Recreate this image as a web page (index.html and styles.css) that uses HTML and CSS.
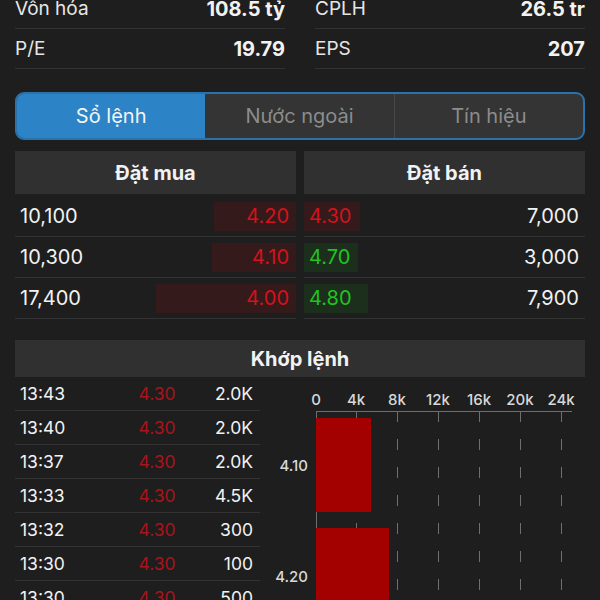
FILE: index.html
```html
<!DOCTYPE html>
<html lang="vi">
<head>
    <meta charset="UTF-8">
    <meta name="viewport" content="width=device-width, initial-scale=1.0">
    <title>Sổ lệnh</title>
    <link rel="stylesheet" href="styles.css">
</head>
<body>
    <div class="page">
        <!-- Chỉ số cơ bản -->
        <div class="stats">
            <div class="stat-col">
                <div class="stat-row"><span class="stat-label">Vốn hóa</span><span class="stat-value">108.5 tỷ</span></div>
                <div class="stat-row"><span class="stat-label">P/E</span><span class="stat-value">19.79</span></div>
            </div>
            <div class="stat-col">
                <div class="stat-row"><span class="stat-label">CPLH</span><span class="stat-value">26.5 tr</span></div>
                <div class="stat-row"><span class="stat-label">EPS</span><span class="stat-value">207</span></div>
            </div>
        </div>

        <div class="tabs">
            <div class="tab active">Sổ lệnh</div>
            <div class="tab">Nước ngoài</div>
            <div class="tab">Tín hiệu</div>
        </div>

        <!-- Sổ lệnh -->
        <div class="book">
            <div class="book-side bid">
                <div class="book-head">Đặt mua</div>
                <div class="book-rows">
                    <div class="book-row"><span class="vol">10,100</span><span class="price down" style="width: 82px">4.20</span></div>
                    <div class="book-row"><span class="vol">10,300</span><span class="price down" style="width: 84px">4.10</span></div>
                    <div class="book-row"><span class="vol">17,400</span><span class="price down" style="width: 140px">4.00</span></div>
                </div>
            </div>
            <div class="book-side ask">
                <div class="book-head">Đặt bán</div>
                <div class="book-rows">
                    <div class="book-row"><span class="price down" style="width: 56px">4.30</span><span class="vol">7,000</span></div>
                    <div class="book-row"><span class="price up" style="width: 54px">4.70</span><span class="vol">3,000</span></div>
                    <div class="book-row"><span class="price up" style="width: 64px">4.80</span><span class="vol">7,900</span></div>
                </div>
            </div>
        </div>

        <!-- Khớp lệnh -->
        <div class="match">
            <div class="match-head">Khớp lệnh</div>
            <div class="match-body">
                <div class="match-list">
                    <div class="match-row"><span>13:43</span><span class="m-price">4.30</span><span class="m-vol">2.0K</span></div>
                    <div class="match-row"><span>13:40</span><span class="m-price">4.30</span><span class="m-vol">2.0K</span></div>
                    <div class="match-row"><span>13:37</span><span class="m-price">4.30</span><span class="m-vol">2.0K</span></div>
                    <div class="match-row"><span>13:33</span><span class="m-price">4.30</span><span class="m-vol">4.5K</span></div>
                    <div class="match-row"><span>13:32</span><span class="m-price">4.30</span><span class="m-vol">300</span></div>
                    <div class="match-row"><span>13:30</span><span class="m-price">4.30</span><span class="m-vol">100</span></div>
                    <div class="match-row"><span>13:30</span><span class="m-price">4.30</span><span class="m-vol">500</span></div>
                </div>
                <div class="match-chart">
                    <svg width="325" height="240" viewBox="0 0 325 240">
                        <g class="axis-text">
                            <text x="56" y="28">0</text>
                            <text x="96" y="28">4k</text>
                            <text x="137" y="28">8k</text>
                            <text x="178" y="28">12k</text>
                            <text x="219" y="28">16k</text>
                            <text x="260" y="28">20k</text>
                            <text x="301" y="28">24k</text>
                        </g>
                        <g class="grid">
                            <line x1="96.5" y1="34" x2="96.5" y2="240"></line>
                            <line x1="137.5" y1="34" x2="137.5" y2="240"></line>
                            <line x1="178.5" y1="34" x2="178.5" y2="240"></line>
                            <line x1="219.5" y1="34" x2="219.5" y2="240"></line>
                            <line x1="260.5" y1="34" x2="260.5" y2="240"></line>
                            <line x1="301.5" y1="34" x2="301.5" y2="240"></line>
                        </g>
                        <line class="axis" x1="56" y1="34.5" x2="312" y2="34.5"></line>
                        <line class="axis" x1="96.5" y1="34" x2="96.5" y2="41"></line>
                        <line class="axis" x1="56.5" y1="34" x2="56.5" y2="240"></line>
                        <rect class="bar" x="56" y="41" width="55" height="94"></rect>
                        <rect class="bar" x="56" y="151" width="73" height="94"></rect>
                        <g class="cat-text">
                            <text x="48" y="94">4.10</text>
                            <text x="48" y="205">4.20</text>
                        </g>
                    </svg>
                </div>
            </div>
        </div>
    </div>
</body>
</html>
```

FILE: styles.css
```css
body {
    margin: 0;
    padding: 0;
    background-color: #1e1e1e;
    color: #f2f2f2;
    font-family: Inter, "Noto Sans", sans-serif;
    overflow: hidden;
}
.page {
    padding: 0 15px;
}
.stats {
    display: flex;
    gap: 30px;
    margin-top: -11px;
}
.stat-col {
    flex: 1;
}
.stat-row {
    display: flex;
    justify-content: space-between;
    align-items: center;
    height: 39px;
    border-bottom: 1px solid #333;
    font-size: 19px;
}
.stat-label {
    color: #e6e6e6;
}
.stat-value {
    font-weight: bold;
    font-size: 20px;
}
.tabs {
    display: flex;
    margin-top: 23px;
    height: 44px;
    border: 2px solid #2b72aa;
    border-radius: 9px;
    overflow: hidden;
    background-color: #343434;
}
.tab {
    flex: 1;
    display: flex;
    align-items: center;
    justify-content: center;
    font-size: 20px;
    color: #8c8c8c;
}
.tab + .tab + .tab {
    border-left: 1px solid #4a4a4a;
}
.tab.active {
    background-color: #2c84c7;
    color: #f4f4f4;
}
.book {
    display: flex;
    gap: 8px;
    margin-top: 11px;
}
.book-side {
    flex: 1;
}
.book-head {
    height: 43px;
    display: flex;
    align-items: center;
    justify-content: center;
    background-color: #303030;
    font-weight: bold;
    font-size: 20px;
}
.book-rows {
    padding-top: 2px;
}
.book-row {
    display: flex;
    justify-content: space-between;
    align-items: center;
    height: 40px;
    border-bottom: 1px solid #333;
    font-size: 20px;
}
.bid .vol {
    padding-left: 5px;
}
.ask .vol {
    padding-right: 6px;
}
.price {
    height: 29px;
    line-height: 29px;
    box-sizing: border-box;
}
.bid .price {
    text-align: right;
    padding-right: 7px;
}
.ask .price {
    padding-left: 5px;
}
.price.down {
    color: #d3121b;
    background-color: #351a1b;
}
.price.up {
    color: #22c321;
    background-color: #1c2f1d;
}
.match {
    margin-top: 21px;
}
.match-head {
    height: 37px;
    display: flex;
    align-items: center;
    justify-content: center;
    background-color: #303030;
    font-weight: bold;
    font-size: 20px;
}
.match-body {
    display: flex;
}
.match-list {
    width: 245px;
}
.match-row {
    display: grid;
    grid-template-columns: 97px 90px 1fr;
    align-items: center;
    height: 33px;
    border-bottom: 1px solid #333;
    font-size: 17.5px;
}
.match-row span:first-child {
    padding-left: 5px;
}
.m-price {
    text-align: center;
    color: #a8141b;
}
.m-vol {
    text-align: right;
    padding-right: 7px;
}
.match-chart {
    flex: 1;
}
.match-chart svg {
    display: block;
}
.axis-text text {
    fill: #d8d8d8;
    font-size: 15px;
    font-weight: 500;
    text-anchor: middle;
}
.cat-text text {
    fill: #d8d8d8;
    font-size: 15px;
    font-weight: 500;
    text-anchor: end;
}
.grid line {
    stroke: #6e6e6e;
    stroke-width: 1;
    stroke-dasharray: 11 17;
}
.axis {
    stroke: #6e6e6e;
    stroke-width: 1;
}
.bar {
    fill: #a30000;
}
```
